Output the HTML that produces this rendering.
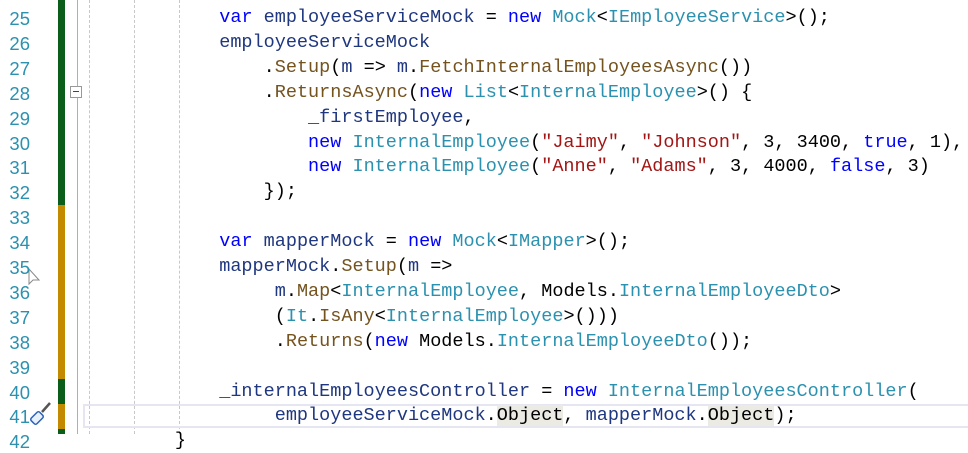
<!DOCTYPE html>
<html><head><style>
body{margin:0;width:968px;height:434px;background:#fff;overflow:hidden;position:relative;font-family:"Liberation Mono",monospace}
.ln{position:absolute;left:4px;width:26px;text-align:right;color:#2b91af;font-family:"Liberation Sans",sans-serif;font-size:18.5px;}
.bar{position:absolute;left:58px;width:7px}
.code{position:absolute;left:86px;white-space:pre;font-size:18.5px;color:#1f377f;letter-spacing:0}
.k{color:#0000ff}.t{color:#2b91af}.m{color:#74531f}.s{color:#a31515}.p{color:#000}
.g{position:absolute;top:0;height:434px;border-left:1px dashed #c8c8c8}
.hl{background:#ebebe3}
</style></head><body>
<div style="position:absolute;left:77px;top:0;width:1px;height:434px;background:#b0b0b0"></div>
<div class="g" style="left:89px"></div><div class="g" style="left:134px"></div><div class="g" style="left:179px"></div>
<div style="position:absolute;left:70px;top:86px;width:10px;height:10px;border:1px solid #999;background:#fff"><div style="position:absolute;left:2px;top:4px;width:6px;height:1px;background:#444"></div></div>
<div style="position:absolute;left:83px;top:404px;width:890px;height:24px;border:2px solid #e6e6f2;box-sizing:border-box"></div>
<div class="bar" style="top:0;height:205px;background:#0b5e1a"></div>
<div class="bar" style="top:205px;height:174px;background:#c38a00"></div>
<div class="bar" style="top:379px;height:25px;background:#0b5e1a"></div>
<div class="bar" style="top:404px;height:25px;background:#c38a00"></div>
<div class="bar" style="top:429px;height:5px;background:#0b5e1a"></div>
<svg style="position:absolute;left:28px;top:400px" width="26" height="28" viewBox="0 0 26 28"><path d="M14 12 L22 3" stroke="#555" stroke-width="2.5"/><rect x="5" y="12" width="8" height="12" rx="2" transform="rotate(45 9 18)" fill="#e8f0fa" stroke="#2a62b8" stroke-width="1.5"/></svg>
<svg style="position:absolute;left:27px;top:268px" width="14" height="20"><path d="M2 1 L2 16 L6 12 L12 12 Z" fill="#fff" stroke="#888"/></svg>
<div id="c"></div>
<script>
var L=[
['25','            <span class="k">var</span> employeeServiceMock <span class="p">=</span> <span class="k">new</span> <span class="t">Mock</span><span class="p">&lt;</span><span class="t">IEmployeeService</span><span class="p">&gt;();</span>'],
['26','            employeeServiceMock'],
['27','                <span class="p">.</span><span class="m">Setup</span><span class="p">(</span>m <span class="p">=&gt;</span> m<span class="p">.</span><span class="m">FetchInternalEmployeesAsync</span><span class="p">())</span>'],
['28','                <span class="p">.</span><span class="m">ReturnsAsync</span><span class="p">(</span><span class="k">new</span> <span class="t">List</span><span class="p">&lt;</span><span class="t">InternalEmployee</span><span class="p">&gt;() {</span>'],
['29','                    _firstEmployee<span class="p">,</span>'],
['30','                    <span class="k">new</span> <span class="t">InternalEmployee</span><span class="p">(</span><span class="s">"Jaimy"</span><span class="p">,</span> <span class="s">"Johnson"</span><span class="p">,</span> <span class="p">3,</span> <span class="p">3400,</span> <span class="k">true</span><span class="p">, 1),</span>'],
['31','                    <span class="k">new</span> <span class="t">InternalEmployee</span><span class="p">(</span><span class="s">"Anne"</span><span class="p">,</span> <span class="s">"Adams"</span><span class="p">,</span> <span class="p">3,</span> <span class="p">4000,</span> <span class="k">false</span><span class="p">, 3)</span>'],
['32','                <span class="p">});</span>'],
['33',''],
['34','            <span class="k">var</span> mapperMock <span class="p">=</span> <span class="k">new</span> <span class="t">Mock</span><span class="p">&lt;</span><span class="t">IMapper</span><span class="p">&gt;();</span>'],
['35','            mapperMock<span class="p">.</span><span class="m">Setup</span><span class="p">(</span>m <span class="p">=&gt;</span>'],
['36','                 m<span class="p">.</span><span class="m">Map</span><span class="p">&lt;</span><span class="t">InternalEmployee</span><span class="p">,</span> <span class="p">Models.</span><span class="t">InternalEmployeeDto</span><span class="p">&gt;</span>'],
['37','                 <span class="p">(</span><span class="t">It</span><span class="p">.</span><span class="m">IsAny</span><span class="p">&lt;</span><span class="t">InternalEmployee</span><span class="p">&gt;()))</span>'],
['38','                 <span class="p">.</span><span class="m">Returns</span><span class="p">(</span><span class="k">new</span> <span class="p">Models.</span><span class="t">InternalEmployeeDto</span><span class="p">());</span>'],
['39',''],
['40','            _internalEmployeesController <span class="p">=</span> <span class="k">new</span> <span class="t">InternalEmployeesController</span><span class="p">(</span>'],
['41','                 employeeServiceMock<span class="p">.</span><span class="hl p">Object</span><span class="p">,</span> mapperMock<span class="p">.</span><span class="hl p">Object</span><span class="p">);</span>'],
['42','        <span class="p">}</span>']
];
var h='';
for(var i=0;i<L.length;i++){var y=7+i*24.9;
h+='<div class="ln" style="top:'+(y+1)+'px">'+L[i][0]+'</div><div class="code" style="top:'+y+'px">'+L[i][1]+'</div>';}
document.getElementById('c').innerHTML=h;
</script>
</body></html>
